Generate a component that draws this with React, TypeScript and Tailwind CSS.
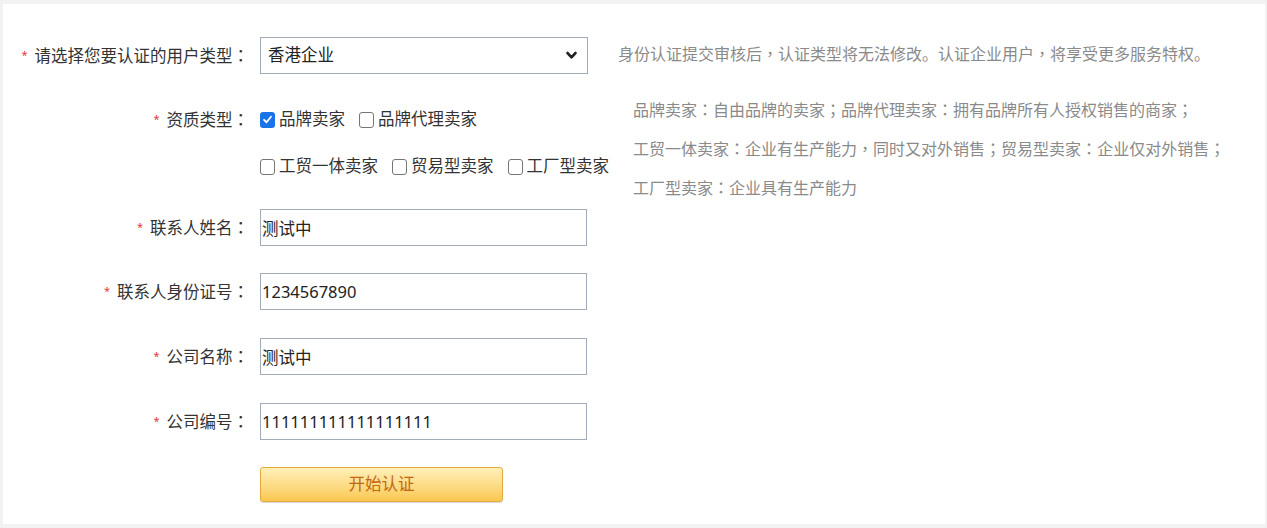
import React, { useState } from 'react';

const font = { fontFamily: '"Noto Sans", "Noto Sans CJK SC", sans-serif' };
const punctFont = { fontFamily: '"Noto Sans CJK TC", "Noto Sans CJK SC", sans-serif' };

// full-width punctuation sits in the middle of its box in the screenshot
const Txt: React.FC<{ children: string }> = ({ children }) => (
    <>
        {children.split(/([，：；])/).map((part, i) =>
            /^[，：；]$/.test(part) ? <span key={i} style={punctFont}>{part}</span> : <React.Fragment key={i}>{part}</React.Fragment>
        )}
    </>
);

// ── Label with red star, right aligned ───────────────────────────────────
const Label: React.FC<{ text: string }> = ({ text }) => (
    <div className="w-[246px] shrink-0 flex items-center justify-end text-[16.5px] text-[#333]">
        <span className="text-[#e4393c] text-[11px] mr-[7px]">*</span>
        <span><Txt>{text + '：'}</Txt></span>
    </div>
);

const Check: React.FC<{ label: string; checked?: boolean; onToggle: () => void }> = ({ label, checked, onToggle }) => (
    <label className="flex items-center gap-[4px] mr-[14px] cursor-pointer select-none" onClick={onToggle}>
        {checked ? (
            <span className="w-[15px] h-[16px] rounded-[3px] bg-[#1a73e8] flex items-center justify-center">
                <svg width="11" height="11" viewBox="0 0 12 12" fill="none">
                    <path d="M2.2 6.3 L4.9 9 L9.8 3" stroke="white" strokeWidth="2" strokeLinecap="round" strokeLinejoin="round" />
                </svg>
            </span>
        ) : (
            <span className="w-[15px] h-[16px] rounded-[3px] border border-[#767676] bg-white" />
        )}
        <span className="text-[16.5px] text-[#333]">{label}</span>
    </label>
);

const Field: React.FC<{ label: string; value: string; className?: string }> = ({ label, value, className }) => (
    <div className={`flex items-center h-[37px] ${className ?? ''}`}>
        <Label text={label} />
        <input
            defaultValue={value}
            className="ml-[11px] w-[327px] h-[37px] border border-[#a3acb6] pl-[1px] text-[16.5px] text-[#222] outline-none bg-white"
            style={font}
        />
    </div>
);

export default function App() {
    const [checked, setChecked] = useState<Record<string, boolean>>({ 品牌卖家: true });
    const toggle = (k: string) => setChecked(p => ({ ...p, [k]: !p[k] }));

    return (
        <div className="w-[1267px] h-[528px] bg-[#f2f2f2] pt-[4px] pl-[3px] pr-[2px] pb-[4px]" style={font}>
            <div className="h-full bg-white flex">
                {/* form column */}
                <div className="w-[612px] shrink-0 pt-[33px] flex flex-col">
                    <div className="flex items-center h-[37px]">
                        <Label text="请选择您要认证的用户类型" />
                        <div className="ml-[11px] w-[328px] h-[37px] border border-[#a3acb6] flex items-center justify-between pl-[7px] pr-[9px] text-[16.5px] text-[#222]">
                            <span>香港企业</span>
                            <svg width="13" height="9" viewBox="0 0 13 9" fill="none">
                                <path d="M2.5 2 L6.5 6.3 L10.5 2" stroke="#222" strokeWidth="2.6" strokeLinecap="round" strokeLinejoin="round" />
                            </svg>
                        </div>
                    </div>

                    <div className="flex items-center h-[37px] mt-[27px]">
                        <Label text="资质类型" />
                        <div className="ml-[11px] flex items-center">
                            <Check label="品牌卖家" checked={checked['品牌卖家']} onToggle={() => toggle('品牌卖家')} />
                            <Check label="品牌代理卖家" checked={checked['品牌代理卖家']} onToggle={() => toggle('品牌代理卖家')} />
                        </div>
                    </div>
                    <div className="flex items-center h-[37px] mt-[10px]">
                        <div className="w-[246px] shrink-0" />
                        <div className="ml-[11px] flex items-center whitespace-nowrap">
                            <Check label="工贸一体卖家" checked={checked['工贸一体卖家']} onToggle={() => toggle('工贸一体卖家')} />
                            <Check label="贸易型卖家" checked={checked['贸易型卖家']} onToggle={() => toggle('贸易型卖家')} />
                            <Check label="工厂型卖家" checked={checked['工厂型卖家']} onToggle={() => toggle('工厂型卖家')} />
                        </div>
                    </div>

                    <Field label="联系人姓名" value="测试中" className="mt-[24px]" />
                    <Field label="联系人身份证号" value="1234567890" className="mt-[27px]" />
                    <Field label="公司名称" value="测试中" className="mt-[28px]" />
                    <Field label="公司编号" value="111111111111111111" className="mt-[28px]" />

                    <div className="flex mt-[27px]">
                        <div className="w-[246px] shrink-0" />
                        <button className="ml-[11px] w-[243px] h-[35px] rounded-[3px] border border-[#e2a93c] bg-gradient-to-b from-[#fff0b8] to-[#fbc84f] shadow-[0_1px_1px_rgba(0,0,0,0.15)] text-[16.5px] text-[#c2690f]">
                            开始认证
                        </button>
                    </div>
                </div>

                {/* hint column */}
                <div className="pl-[3px] pt-[31px] text-[16px] text-[#8a8a8a] whitespace-nowrap">
                    <div className="leading-[37px]"><Txt>身份认证提交审核后，认证类型将无法修改。认证企业用户，将享受更多服务特权。</Txt></div>
                    <div className="pl-[15px] mt-[17px] leading-[38px]">
                        <div><Txt>品牌卖家：自由品牌的卖家；品牌代理卖家：拥有品牌所有人授权销售的商家；</Txt></div>
                        <div><Txt>工贸一体卖家：企业有生产能力，同时又对外销售；贸易型卖家：企业仅对外销售；</Txt></div>
                        <div><Txt>工厂型卖家：企业具有生产能力</Txt></div>
                    </div>
                </div>
            </div>
        </div>
    );
}
